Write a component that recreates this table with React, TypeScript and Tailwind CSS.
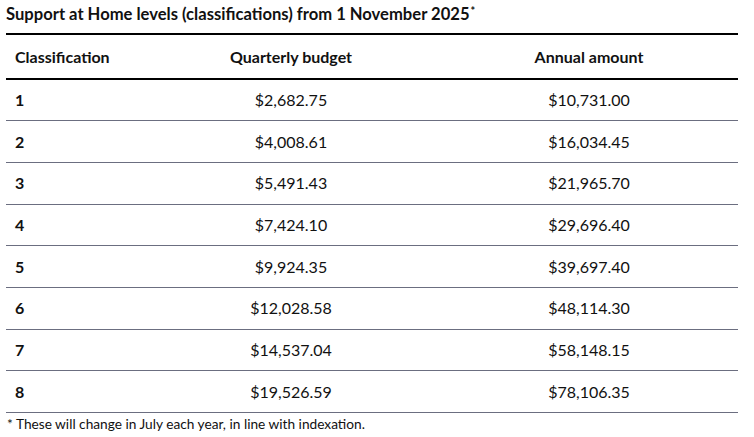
const rows = [
    ['1', '$2,682.75', '$10,731.00'],
    ['2', '$4,008.61', '$16,034.45'],
    ['3', '$5,491.43', '$21,965.70'],
    ['4', '$7,424.10', '$29,696.40'],
    ['5', '$9,924.35', '$39,697.40'],
    ['6', '$12,028.58', '$48,114.30'],
    ['7', '$14,537.04', '$58,148.15'],
    ['8', '$19,526.59', '$78,106.35'],
];

const App = () => {
    return (
        <div className="w-[754px] h-[437px] bg-white pl-[6px] text-[#111] font-['Lato',sans-serif]">
            <h1 className="h-[33px] pt-[1px] leading-[26px] text-[16.6px] font-bold">
                Support at Home levels (classifications) from 1 November 2025
                <sup className="text-[11px] ml-[1px] font-bold">*</sup>
            </h1>

            <table className="w-[732px] border-collapse table-fixed">
                <colgroup>
                    <col className="w-[136px]" />
                    <col className="w-[298px]" />
                    <col className="w-[298px]" />
                </colgroup>
                <thead>
                    <tr className="h-[45px] border-t-2 border-b-2 border-black text-[16px] font-bold">
                        <th className="text-left pl-[9px] font-bold">Classification</th>
                        <th className="text-center font-bold">Quarterly budget</th>
                        <th className="text-center font-bold">Annual amount</th>
                    </tr>
                </thead>
                <tbody className="text-[16px]">
                    {rows.map(([level, quarterly, annual]) => (
                        <tr key={level} className="h-[41.7px] border-b border-[#6b6e80]">
                            <td className="pl-[9px] font-bold">{level}</td>
                            <td className="text-center">{quarterly}</td>
                            <td className="text-center">{annual}</td>
                        </tr>
                    ))}
                </tbody>
            </table>

            {/* footnote */}
            <p className="pl-[1px] pt-[1px] leading-[20px] text-[13.7px]">
                * These will change in July each year, in line with indexation.
            </p>
        </div>
    );
};

export default App;
